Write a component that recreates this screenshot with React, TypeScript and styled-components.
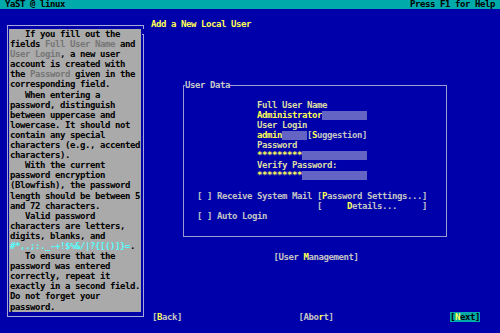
import React from 'react';
import styled, { createGlobalStyle } from 'styled-components';

const Global = createGlobalStyle`
  html, body { margin: 0; padding: 0; background: #0000aa; }
  body { width: 500px; height: 333px; overflow: hidden; }
`;

const Screen = styled.div`
  width: 500px;
  height: 333px;
  background: #0000aa;
  display: flex;
  flex-direction: column;
  font-family: "DejaVu Sans Mono", "Liberation Mono", monospace;
  font-size: 9px;
  letter-spacing: -0.42px;
  font-weight: bold;
  line-height: 10px;
  color: #c4c4c4;
  white-space: pre;
`;

const TopBar = styled.div`
  height: 9px;
  line-height: 9px;
  background: #00aaaa;
  color: #000;
  display: flex;
  justify-content: space-between;
  padding: 0 5px;
`;

const Body = styled.div`
  flex: 1;
  display: flex;
`;

const HelpColumn = styled.div`
  width: 151px;
  box-sizing: border-box;
  padding: 16px 0 0 7px;
`;

const HelpFrame = styled.div`
  position: relative;
  width: 137px;
  height: 292px;
  box-sizing: border-box;
  border: 1px solid #a8a8d8;
  padding: 3px 2px 4px 1px;

  &::after {
    content: '';
    position: absolute;
    right: -1px;
    top: 3px;
    width: 1px;
    height: 5px;
    background: #0000aa;
  }

  &::before {
    content: '';
    position: absolute;
    right: -1px;
    top: 8px;
    width: 2px;
    height: 1px;
    background: #a8a8d8;
  }
`;

const HelpBox = styled.div`
  background: #aaaaaa;
  color: #000;
  height: 283px;
  padding-left: 1px;
  line-height: 10.1px;
`;

const HelpLine = styled.div`
  height: 10.1px;
`;

const Hl = styled.span`
  color: #767676;
`;

const Code = styled.span`
  color: #55ffff;
`;

const Main = styled.div`
  width: 330px;
  display: flex;
  flex-direction: column;
`;

const Title = styled.div`
  margin-top: 10px;
  color: #ffff55;
`;

const Frame = styled.div`
  position: relative;
  margin: 56px 0 0 32px;
  width: 264px;
  height: 152px;
  box-sizing: border-box;
  border: 1px solid #9a9ad0;
  padding-top: 14px;
`;

const FrameTitle = styled.div`
  position: absolute;
  top: -6px;
  left: 1px;
  background: #0000aa;
  color: #c8c8c8;
`;

const Inputs = styled.div`
  margin-left: 73px;
  width: 110px;
  display: flex;
  flex-direction: column;
`;

const Label = styled.div`
  color: #dcdca4;
  height: 10px;
`;

const ValueRow = styled.div`
  display: flex;
  height: 10px;
`;

const Value = styled.span`
  color: #ffff55;
`;

const Field = styled.span<{ $w?: number }>`
  background: #6464c4;
  margin-top: 1px;
  height: 9px;
  ${(p) => (p.$w ? `width: ${p.$w}px;` : 'flex: 1;')}
`;

const Options = styled.div`
  margin: 11px 0 0 13px;
  display: flex;
  flex-direction: column;
`;

const Row = styled.div`
  height: 10px;
`;

const Key = styled.span`
  color: #ffff55;
`;

const MgmtRow = styled.div`
  margin-top: 15px;
  text-align: center;
`;

const Nav = styled.div`
  margin-top: auto;
  margin-bottom: 11px;
  display: grid;
  grid-template-columns: 1fr auto 1fr;
  padding: 0 1px;
`;

const NavLeft = styled.div`
  justify-self: start;
`;

const NavRight = styled.div`
  justify-self: end;
`;

const Focused = styled.span`
  background: #00aaaa;
  color: #000;
`;

const helpLines: React.ReactNode[] = [
  '   If you fill out the',
  <>fields <Hl>Full User Name</Hl> and</>,
  <><Hl>User Login</Hl>, a new user</>,
  'account is created with',
  <>the <Hl>Password</Hl> given in the</>,
  'corresponding field.',
  '   When entering a',
  'password, distinguish',
  'between uppercase and',
  'lowercase. It should not',
  'contain any special',
  'characters (e.g., accented',
  'characters).',
  '   With the current',
  'password encryption',
  '(Blowfish), the password',
  'length should be between 5',
  'and 72 characters.',
  '   Valid password',
  'characters are letters,',
  'digits, blanks, and',
  <><Code>{'#*,.;:._-+!$%&/|?{[()]}='}</Code>.</>,
  '   To ensure that the',
  'password was entered',
  'correctly, repeat it',
  'exactly in a second field.',
  'Do not forget your',
  'password.',
];

export default function App() {
  return (
    <>
      <Global />
      <Screen>
        <TopBar>
          <span>YaST @ linux</span>
          <span>Press F1 for Help</span>
        </TopBar>
        <Body>
          <HelpColumn>
            <HelpFrame>
              <HelpBox>
                {helpLines.map((l, i) => (
                  <HelpLine key={i}>{l}</HelpLine>
                ))}
              </HelpBox>
            </HelpFrame>
          </HelpColumn>
          <Main>
            <Title>Add a New Local User</Title>
            <Frame>
              <FrameTitle>User Data</FrameTitle>
              <Inputs>
                <Label>Full User Name</Label>
                <ValueRow>
                  <Value>Administrator</Value>
                  <Field />
                </ValueRow>
                <Label>User Login</Label>
                <ValueRow>
                  <Value>admin</Value>
                  <Field $w={25} />
                  <span>[<Key>S</Key>uggestion]</span>
                </ValueRow>
                <Label>Password</Label>
                <ValueRow>
                  <Value>*********</Value>
                  <Field />
                </ValueRow>
                <Label>Verify Password:</Label>
                <ValueRow>
                  <Value>*********</Value>
                  <Field />
                </ValueRow>
              </Inputs>
              <Options>
                <Row>
                  {'[ ] Receive System Mail ['}
                  <Key>P</Key>
                  {'assword Settings...]'}
                </Row>
                <Row>
                  {'                        [     '}
                  <Key>D</Key>
                  {'etails...     ]'}
                </Row>
                <Row>[ ] Auto Login</Row>
              </Options>
            </Frame>
            <MgmtRow>
              [User <Key>M</Key>anagement]
            </MgmtRow>
            <Nav>
              <NavLeft>
                [<Key>B</Key>ack]
              </NavLeft>
              <div>
                [Abo<Key>r</Key>t]
              </div>
              <NavRight>
                <Focused>
                  [<Key>N</Key>ext]
                </Focused>
              </NavRight>
            </Nav>
          </Main>
        </Body>
      </Screen>
    </>
  );
}
